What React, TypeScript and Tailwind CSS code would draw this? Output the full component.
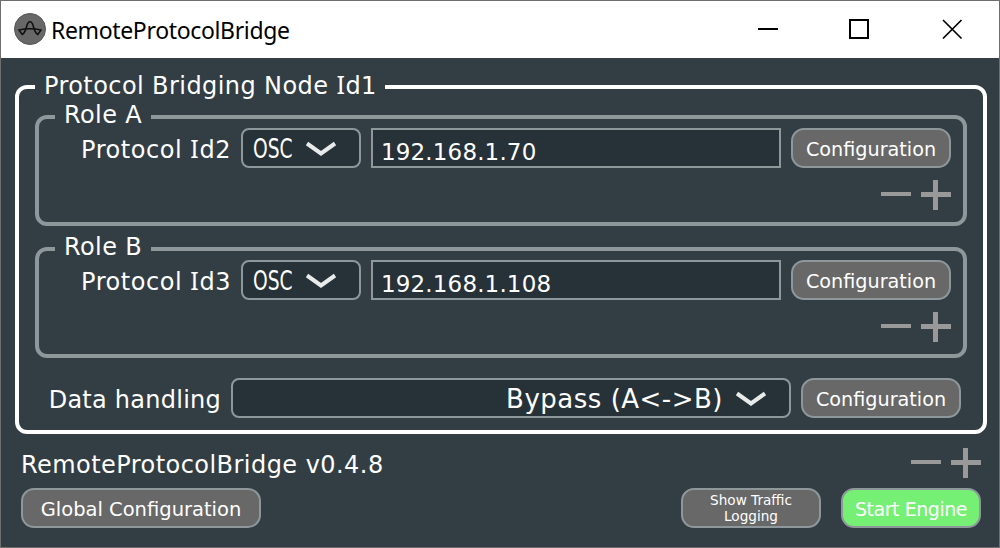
import type { ReactNode } from "react";

function Chevron() {
  return (
    <svg className="mt-0.5 h-4 w-8 shrink-0" viewBox="0 0 32 16" fill="none" stroke="#e9ebeb" strokeWidth="4">
      <path d="M2 2.500 L16 12.500 L30 2.500" />
    </svg>
  );
}

function PlusMinus() {
  return (
    <div className="flex gap-2.5">
      <button aria-label="Remove" className="h-[30px] w-[30px]">
        <svg width="30" height="30" viewBox="0 0 30 30" fill="#999">
          <rect x="0" y="12" width="30" height="4" />
        </svg>
      </button>
      <button aria-label="Add" className="h-[30px] w-[30px]">
        <svg width="30" height="30" viewBox="0 0 30 30" fill="#999">
          <rect x="0" y="12" width="30" height="5" />
          <rect x="12" y="0" width="5" height="30" />
        </svg>
      </button>
    </div>
  );
}

function Button({ children, className }: { children: ReactNode; className: string }) {
  return (
    <button
      className={`flex h-10 shrink-0 items-center justify-center rounded-[13px] border-2 border-[#8e989b] whitespace-nowrap ${className}`}
    >
      {children}
    </button>
  );
}

function Id({ n }: { n: number }) {
  return (
    <>
      <span className="font-['Noto_Sans',sans-serif] text-[25px] leading-none">I</span>d{n}
    </>
  );
}

function Role({ name, id, address }: { name: string; id: number; address: string }) {
  return (
    <fieldset className="h-[124px] w-[932px] rounded-xl border-4 border-[#8e989b]">
      <legend className="ml-4 h-[30px] w-24 pl-[9px] leading-[27px] tracking-[0.4px] whitespace-pre">{name}</legend>
      <div className="-mt-[4px] flex h-10 items-center pr-3">
        <span className="flex-1 pt-[3px] pr-2.5 text-right tracking-[0.55px] whitespace-nowrap">
          Protocol <Id n={id} />
        </span>
        <div className="flex h-10 w-[120px] items-center rounded-lg border-2 border-[#8e989b] bg-[#263238] pl-2.5">
          <span className="w-[52px] shrink-0 pt-px text-[26px]">
            <span className="inline-block origin-left scale-x-[0.72]">OSC</span>
          </span>
          <Chevron />
        </div>
        <div className="ml-2.5 flex h-10 w-[410px] items-center border-2 border-[#8e989b] bg-[#263238] pt-2 pl-2 text-[23px] tracking-[0.15px]">
          {address}
        </div>
        <Button className="ml-2.5 w-40 bg-[#686868] pt-[3px] text-[19.2px]">Configuration</Button>
      </div>
      <div className="mt-3 flex justify-end pr-3">
        <PlusMinus />
      </div>
    </fieldset>
  );
}

export default function App() {
  return (
    <div className="flex h-[548px] w-[1000px] flex-col overflow-hidden border border-[#6e6e6e] bg-[#323e44] font-['DejaVu_Sans',sans-serif] text-[24px] leading-[30px] text-white">
      <header className="flex h-[57px] shrink-0 items-center bg-white pl-[13px] text-black">
        <svg className="-mt-px h-8 w-8 shrink-0" viewBox="0 0 32 32" fill="none">
          <circle cx="16" cy="16" r="15.5" fill="#686868" stroke="#555" />
          <path
            d="M5 17 Q16 14.500 27 17 L23.800 21.500 Q20.800 19.500 19.500 14 Q18.300 8.800 16 8.800 Q13.700 8.800 12.500 14 Q11.200 19.500 8.200 21.500 Z"
            stroke="#111"
            strokeWidth="1.6"
          />
        </svg>
        <h1 className="ml-[5px] font-['Noto_Sans',sans-serif] text-[23px] tracking-[-0.35px]">RemoteProtocolBridge</h1>
        <svg className="mr-[36px] ml-auto" width="206" height="22" viewBox="0 0 206 22" fill="none" stroke="#000" strokeWidth="2">
          <path d="M1 10 H21" />
          <rect x="93" y="1" width="18" height="18" />
          <path d="M186 1 L204.500 19.500 M204.500 1 L186 19.500" strokeWidth="1.7" />
        </svg>
      </header>
      <main className="flex flex-1 flex-col pt-[14px] pl-[14px]">
        <fieldset className="h-[362px] w-[972px] rounded-xl border-4 border-white pl-4">
          <legend className="h-[30px] w-[350px] pl-[9px] leading-[22px] tracking-[0.42px] whitespace-nowrap">
            Protocol Bridging Node <Id n={1} />
          </legend>
          <div className="flex flex-col gap-2">
            <Role name="Role A" id={2} address="192.168.1.70" />
            <Role name="Role B" id={3} address="192.168.1.108" />
          </div>
          <div className="mt-5 flex h-10 items-center pr-[22px]">
            <span className="flex-1 pt-[3px] pr-2.5 text-right tracking-[0.25px] whitespace-nowrap">Data handling</span>
            <div className="flex h-10 w-[560px] items-center justify-end rounded-lg border-2 border-[#8e989b] bg-[#263238] pr-[22px] text-[26px] tracking-[0.5px]">
              <span className="mr-3 pt-0.5">Bypass (A&lt;-&gt;B)</span>
              <Chevron />
            </div>
            <Button className="ml-2.5 w-40 bg-[#686868] pt-[3px] text-[19.2px]">Configuration</Button>
          </div>
        </fieldset>
        <div className="mt-[14px] flex h-[30px] items-center justify-between pr-[18px] pl-1.5">
          <span className="pt-[3px] tracking-[0.45px]">RemoteProtocolBridge v0.4.8</span>
          <PlusMinus />
        </div>
        <div className="mt-2.5 flex pr-[18px] pl-1.5">
          <Button className="w-60 bg-[#686868] pt-[3px] text-[19.5px]">Global Configuration</Button>
          <Button className="ml-auto w-[140px] bg-[#686868] text-[13.6px] leading-4">
            <span>
              Show Traffic
              <br />
              Logging
            </span>
          </Button>
          <Button className="ml-5 w-[140px] bg-[#75f075] pt-0.5 text-[19px] tracking-[-0.45px]">Start Engine</Button>
        </div>
      </main>
    </div>
  );
}
